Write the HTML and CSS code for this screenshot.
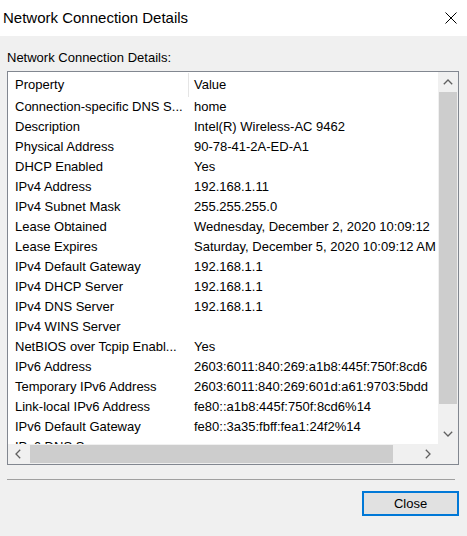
FILE: index.html
```html
<!DOCTYPE html>
<html lang="en">
<head>
<meta charset="utf-8">
<title>Network Connection Details</title>
<link rel="stylesheet" href="styles.css">
</head>
<body>
<div class="window">
  <header class="titlebar">
    <span class="title">Network Connection Details</span>
    <button class="close-x" aria-label="Close">
      <svg width="12" height="12" viewBox="0 0 12 12"><path d="M0.5 0.5 L11.5 11.5 M11.5 0.5 L0.5 11.5" stroke="#000" stroke-width="1" fill="none"/></svg>
    </button>
  </header>
  <main class="content">
    <div class="label">Network Connection Details:</div>
    <div class="listview">
      <div class="viewport">
        <div class="row head">
          <div class="c1">Property</div>
          <div class="c2">Value</div>
        </div>
        <div class="row"><div class="c1">Connection-specific DNS S...</div><div class="c2">home</div></div>
        <div class="row"><div class="c1">Description</div><div class="c2">Intel(R) Wireless-AC 9462</div></div>
        <div class="row"><div class="c1">Physical Address</div><div class="c2">90-78-41-2A-ED-A1</div></div>
        <div class="row"><div class="c1">DHCP Enabled</div><div class="c2">Yes</div></div>
        <div class="row"><div class="c1">IPv4 Address</div><div class="c2">192.168.1.11</div></div>
        <div class="row"><div class="c1">IPv4 Subnet Mask</div><div class="c2">255.255.255.0</div></div>
        <div class="row"><div class="c1">Lease Obtained</div><div class="c2">Wednesday, December 2, 2020 10:09:12</div></div>
        <div class="row"><div class="c1">Lease Expires</div><div class="c2">Saturday, December 5, 2020 10:09:12 AM</div></div>
        <div class="row"><div class="c1">IPv4 Default Gateway</div><div class="c2">192.168.1.1</div></div>
        <div class="row"><div class="c1">IPv4 DHCP Server</div><div class="c2">192.168.1.1</div></div>
        <div class="row"><div class="c1">IPv4 DNS Server</div><div class="c2">192.168.1.1</div></div>
        <div class="row"><div class="c1">IPv4 WINS Server</div><div class="c2"></div></div>
        <div class="row"><div class="c1">NetBIOS over Tcpip Enabl...</div><div class="c2">Yes</div></div>
        <div class="row"><div class="c1">IPv6 Address</div><div class="c2">2603:6011:840:269:a1b8:445f:750f:8cd6</div></div>
        <div class="row"><div class="c1">Temporary IPv6 Address</div><div class="c2">2603:6011:840:269:601d:a61:9703:5bdd</div></div>
        <div class="row"><div class="c1">Link-local IPv6 Address</div><div class="c2">fe80::a1b8:445f:750f:8cd6%14</div></div>
        <div class="row"><div class="c1">IPv6 Default Gateway</div><div class="c2">fe80::3a35:fbff:fea1:24f2%14</div></div>
        <div class="row"><div class="c1">IPv6 DNS Server</div><div class="c2"></div></div>
      </div>
      <div class="vscroll">
        <div class="arrow">
          <svg width="10" height="6" viewBox="0 0 10 6"><path d="M0.8 5.2 L5 1 L9.2 5.2" stroke="#606060" stroke-width="1.3" fill="none"/></svg>
        </div>
        <div class="thumb v"></div>
        <div class="track"></div>
        <div class="arrow">
          <svg width="10" height="6" viewBox="0 0 10 6"><path d="M0.8 0.8 L5 5 L9.2 0.8" stroke="#606060" stroke-width="1.3" fill="none"/></svg>
        </div>
      </div>
      <div class="hscroll">
        <div class="arrow">
          <svg width="6" height="10" viewBox="0 0 6 10"><path d="M5.2 0.8 L1 5 L5.2 9.2" stroke="#606060" stroke-width="1.3" fill="none"/></svg>
        </div>
        <div class="thumb h"></div>
        <div class="track"></div>
        <div class="arrow">
          <svg width="6" height="10" viewBox="0 0 6 10"><path d="M0.8 0.8 L5 5 L0.8 9.2" stroke="#606060" stroke-width="1.3" fill="none"/></svg>
        </div>
      </div>
      <div class="corner"></div>
    </div>
    <hr class="separator">
    <div class="actions">
      <button class="btn">Close</button>
    </div>
  </main>
</div>
</body>
</html>
```
FILE: styles.css
```css
html, body {
  margin: 0;
  padding: 0;
}

body {
  font-family: "Liberation Sans", Arial, sans-serif;
  font-size: 13px;
  color: #000;
  background: #f0f0f0;
}

.window {
  width: 467px;
  height: 536px;
  background: #f0f0f0;
  overflow: hidden;
}

/* title bar */
.titlebar {
  height: 36px;
  background: #fff;
  display: flex;
  align-items: center;
  justify-content: space-between;
  padding-left: 3px;
  box-sizing: border-box;
}

.title {
  font-size: 15px;
  line-height: 18px;
}

.close-x {
  width: 32px;
  height: 36px;
  margin-right: 0;
  border: 0;
  padding: 0;
  background: transparent;
  display: flex;
  align-items: center;
  justify-content: center;
}

/* dialog body */
.content {
  padding: 14px 8px 0 7px;
}

.label {
  line-height: 16px;
}

/* list view with scrollbars */
.listview {
  margin-top: 5px;
  width: 452px;
  height: 394px;
  box-sizing: border-box;
  border: 1px solid #828790;
  background: #fff;
  display: grid;
  grid-template-columns: 430px 20px;
  grid-template-rows: 372px 20px;
}

.viewport {
  overflow: hidden;
  white-space: nowrap;
  padding-top: 1px;
}

.row {
  display: flex;
  height: 20px;
  line-height: 20px;
}

.row.head {
  height: 24px;
  line-height: 23px;
}

.c1 {
  width: 180px;
  flex: none;
  box-sizing: border-box;
  padding-left: 7px;
  overflow: hidden;
}

.c2 {
  padding-left: 6px;
  flex: none;
}

.row.head .c1 {
  border-right: 1px solid #e5e5e5;
  width: 181px;
}

.row.head .c2 {
  padding-left: 5px;
}

.vscroll {
  background: #f0f0f0;
  display: flex;
  flex-direction: column;
}

.hscroll {
  background: #f0f0f0;
  display: flex;
}

.arrow {
  width: 20px;
  height: 20px;
  flex: none;
  display: flex;
  align-items: center;
  justify-content: center;
}

.thumb {
  background: #cdcdcd;
}

.thumb.v {
  height: 312px;
  margin: 0 1px;
}

.thumb.h {
  width: 363px;
  margin: 1px 0 1px 2px;
}

.track {
  flex: 1;
}

.corner {
  background: #f0f0f0;
}

.separator {
  margin: 14px 0 0 0;
  width: 448px;
  height: 0;
  border: 0;
  border-top: 1px solid #a0a0a0;
}

.actions {
  display: flex;
  justify-content: flex-end;
  margin-top: 11px;
}

.btn {
  width: 97px;
  height: 25px;
  box-sizing: border-box;
  border: 2px solid #0078d7;
  background: #e1e1e1;
  font-family: "Liberation Sans", Arial, sans-serif;
  font-size: 13px;
  color: #000;
  padding: 0;
}
```
